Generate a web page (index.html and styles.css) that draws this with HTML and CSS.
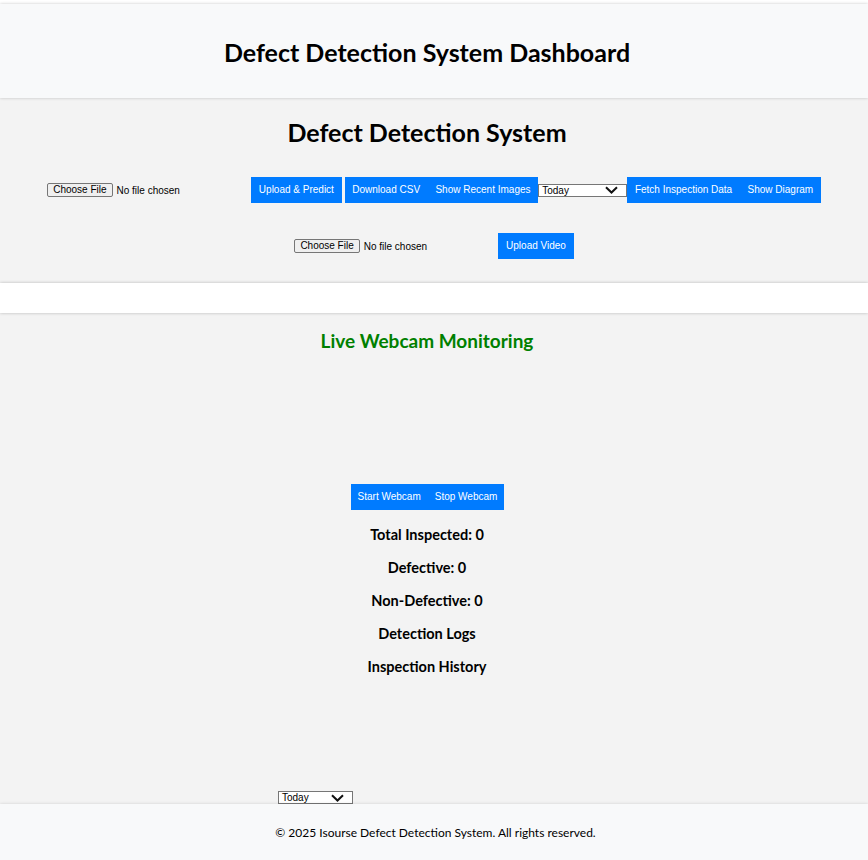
FILE: index.html
```html
<!DOCTYPE html>
<html lang="en">
<head>
<meta charset="utf-8">
<title>Defect Detection System Dashboard</title>
<link rel="stylesheet" href="styles.css">
</head>
<body>
<header class="top-header">
  <h1 class="page-title">Defect Detection System Dashboard</h1>
</header>

<section class="controls">
  <h2 class="section-title">Defect Detection System</h2>
  <div class="control-row">
    <div class="file-input"><span class="file-btn">Choose File</span><span class="file-text">No file chosen</span></div>
    <button class="btn gap-left">Upload &amp; Predict</button>
    <button class="btn gap-left">Download CSV</button>
    <button class="btn">Show Recent Images</button>
    <div class="select select-wide"><span>Today</span><svg class="chev" width="13" height="8" viewBox="0 0 13 8"><path d="M1 1.2 L6.5 6.5 L12 1.2" fill="none" stroke="#111" stroke-width="2"/></svg></div>
    <button class="btn">Fetch Inspection Data</button>
    <button class="btn">Show Diagram</button>
  </div>
  <div class="control-row row-two">
    <div class="file-input"><span class="file-btn">Choose File</span><span class="file-text">No file chosen</span></div>
    <button class="btn gap-left">Upload Video</button>
  </div>
</section>

<div class="result-strip"></div>

<section class="webcam">
  <h3 class="webcam-title">Live Webcam Monitoring</h3>
  <div class="video-box"></div>
  <div class="webcam-buttons">
    <button class="btn btn-wc">Start Webcam</button><button class="btn btn-wc">Stop Webcam</button>
  </div>
  <div class="stats">
    <h4 class="stat">Total Inspected: 0</h4>
    <h4 class="stat">Defective: 0</h4>
    <h4 class="stat">Non-Defective: 0</h4>
    <h4 class="stat">Detection Logs</h4>
    <h4 class="stat">Inspection History</h4>
  </div>
  <div class="history-box"></div>
  <div class="history-filter">
    <div class="select select-small"><span>Today</span><svg class="chev" width="13" height="8" viewBox="0 0 13 8"><path d="M1 1.2 L6.5 6.5 L12 1.2" fill="none" stroke="#111" stroke-width="2"/></svg></div>
  </div>
</section>

<footer class="site-footer">
  <p class="footer-text">© 2025 Isourse Defect Detection System. All rights reserved.</p>
</footer>
</body>
</html>
```

FILE: styles.css
```css
* { box-sizing: border-box; }

html, body {
  margin: 0;
  padding: 0;
  background: #ffffff;
  font-family: Lato, "Noto Sans", sans-serif;
  color: #000;
}

body {
  padding-top: 4px;
  overflow: hidden;
}

.top-header {
  height: 94px;
  background: #f8f9fa;
  box-shadow: 0 0 3px rgba(0, 0, 0, 0.22);
  display: flex;
  align-items: center;
  justify-content: center;
  padding: 2px 14px 0 0;
  position: relative;
  z-index: 2;
}

.page-title {
  margin: 0;
  font-size: 25px;
  font-weight: 700;
  line-height: 30px;
}

.controls {
  background: #f3f3f3;
  padding: 19px 0 24px;
  height: 185px;
}

.section-title {
  margin: 0;
  padding-right: 14px;
  text-align: center;
  font-size: 25px;
  line-height: 30px;
  font-weight: 700;
}

.control-row {
  display: flex;
  justify-content: center;
  align-items: center;
  margin-top: 30px;
  height: 26px;
}

.file-input {
  width: 201px;
  display: flex;
  align-items: center;
  font-family: "Liberation Sans", Arial, sans-serif;
  font-size: 10px;
}

.file-btn {
  display: inline-block;
  height: 14px;
  line-height: 12px;
  padding: 0 5px;
  border: 1px solid #767676;
  border-radius: 2px;
  background: #efefef;
  color: #000;
  white-space: nowrap;
}

.file-text {
  margin-left: 4px;
  white-space: nowrap;
}

.btn {
  font-family: "Liberation Sans", Arial, sans-serif;
  font-size: 10px;
  line-height: 12px;
  padding: 7px 7.7px;
  height: 26px;
  background: #007bff;
  color: #fff;
  border: 0;
  border-radius: 0;
  margin: 0;
  white-space: nowrap;
}

.gap-left {
  margin-left: 3px;
}

.select {
  display: flex;
  align-items: center;
  justify-content: space-between;
  height: 13px;
  border: 1px solid #767676;
  background: #fff;
  font-family: "Liberation Sans", Arial, sans-serif;
  font-size: 10px;
  line-height: 11px;
  padding: 0 8px 0 3px;
}

.select-wide {
  width: 89px;
}

.select-small {
  width: 75px;
}

.chev {
  display: block;
}

.result-strip {
  height: 30px;
  background: #fff;
  box-shadow: 0 0 3px rgba(0, 0, 0, 0.25);
  position: relative;
  z-index: 1;
}

.webcam {
  background: #f3f3f3;
  padding-top: 17px;
  height: 491px;
}

.webcam-title {
  margin: 0;
  padding-right: 14px;
  text-align: center;
  color: #008000;
  font-size: 19px;
  line-height: 22px;
  font-weight: 700;
}

.video-box {
  height: 132px;
}

.webcam-buttons {
  display: flex;
  justify-content: center;
  padding-right: 13px;
}

.btn-wc {
  padding: 7px 7px;
}

.stats {
  display: flex;
  flex-direction: column;
  align-items: center;
  gap: 15px;
  margin-top: 15px;
  padding-top: 1px;
  padding-right: 14px;
}

.stat {
  margin: 0;
  font-size: 14.5px;
  line-height: 18px;
  font-weight: 700;
}

.history-box {
  height: 115px;
}

.history-filter {
  display: flex;
  padding-left: 278px;
}

.site-footer {
  height: 56px;
  background: #f8f9fa;
  box-shadow: 0 0 3px rgba(0, 0, 0, 0.15);
  display: flex;
  align-items: center;
  justify-content: center;
  padding: 1px 0 0 3px;
  position: relative;
}

.footer-text {
  margin: 0;
  font-size: 12px;
  line-height: 16px;
}
```
